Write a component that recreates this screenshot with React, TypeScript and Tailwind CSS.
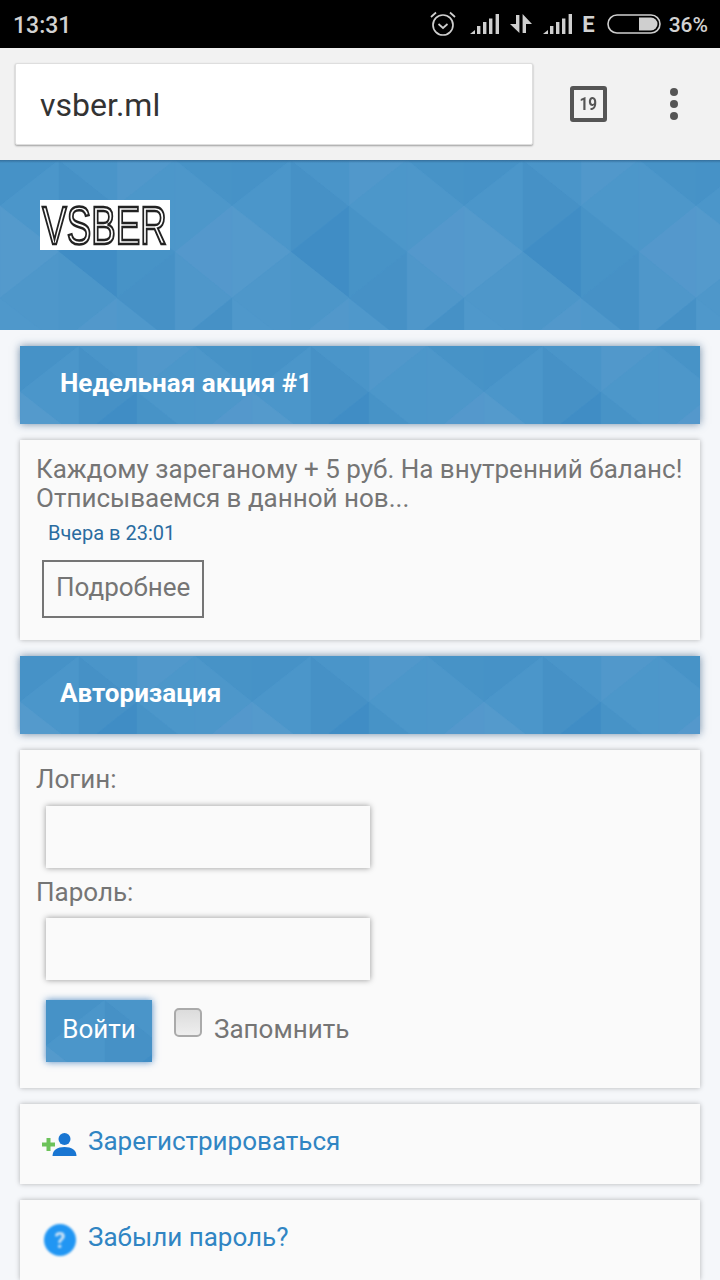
import type {ReactNode} from 'react';

// one tile of the low-poly background, 232px wide
const tile: [string, string][] = [
  ['0,-46 59,0 0,46', '#4591c7'],
  ['0,46 59,0 59,92', '#4b96ca'],
  ['0,46 59,92 0,138', '#569bcd'],
  ['0,138 59,92 59,184', '#4e97ca'],
  ['59,0 117,46 59,92', '#4490c6'],
  ['59,92 117,46 117,138', '#3d8bc4'],
  ['59,92 117,138 59,184', '#4c96c9'],
  ['59,184 117,138 117,230', '#5399cc'],
  ['117,-46 175,0 117,46', '#5298cb'],
  ['117,46 175,0 175,92', '#4c97ca'],
  ['117,46 175,92 117,138', '#4692c7'],
  ['117,138 175,92 175,184', '#4490c6'],
  ['175,0 232,-46 232,46', '#4692c7'],
  ['175,0 232,46 175,92', '#4d97ca'],
  ['175,92 232,46 232,138', '#5699cd'],
  ['175,92 232,138 175,184', '#4f97ca'],
  ['175,184 232,138 232,230', '#4490c6'],
  ['59,0 117,-46 117,46', '#4a95c9'],
];

const Triangles = () => (
  <svg className="absolute top-0 left-0 opacity-80" width="720" height="170" aria-hidden="true">
    {[0, 1, 2, 3].map((k) => (
      <g key={k} transform={`translate(${k * 232},0)`}>
        {tile.map(([points, fill]) => (
          <polygon key={points} points={points} fill={fill} stroke={fill} strokeWidth="0.5" />
        ))}
      </g>
    ))}
  </svg>
);

const SignalIcon = () => (
  <svg width="30" height="21" viewBox="0 0 30 21" fill="#cfcfcf">
    <polygon points="0,20 5,16 5,20" />
    <rect x="7" y="12" width="3.4" height="8" />
    <rect x="13" y="8" width="3.4" height="12" />
    <rect x="19" y="4.5" width="3.4" height="15.5" />
    <rect x="25.6" y="0" width="3.4" height="20" />
  </svg>
);

const AlarmIcon = () => (
  <svg width="28" height="28" viewBox="0 0 28 28" fill="none" stroke="#cfcfcf" strokeWidth="1.7">
    <circle cx="14" cy="15" r="10" />
    <path d="M9.5 14l4.5 4 4.5-4" />
    <path d="M2 7l5-4.5M26 7l-5-4.5" />
  </svg>
);

const ArrowsIcon = () => (
  <svg width="22" height="20" viewBox="0 0 22 20" fill="#cfcfcf">
    <path d="M6 1h3.4v18L0 10h6z" />
    <path d="M12.6 0l9.4 10h-6v9h-3.4z" />
  </svg>
);

const BatteryIcon = () => (
  <svg width="54" height="20" viewBox="0 0 54 20">
    <rect x="1" y="1" width="52" height="18" rx="9" fill="none" stroke="#cfcfcf" strokeWidth="1.6" />
    <path d="M32 3.5h12a6.5 6.5 0 0 1 0 13H32z" fill="#cfcfcf" />
  </svg>
);

const StatusBar = () => (
  <div className="h-12 bg-black flex items-center justify-between pl-[13px] pr-[12px] text-[#d2d2d2] font-medium text-[23px] leading-none">
    <span className="mt-[2px]">13:31</span>
    <div className="flex items-center">
      <AlarmIcon />
      <div className="w-[13px]" />
      <SignalIcon />
      <div className="w-[10px]" />
      <ArrowsIcon />
      <div className="w-[11px]" />
      <SignalIcon />
      <span className="ml-[9px] mr-[12px] font-bold text-[22px] mt-[1px]">E</span>
      <BatteryIcon />
      <span className="ml-[8px] text-[21px] mt-[2px]">36%</span>
    </div>
  </div>
);

const Toolbar = () => (
  <div className="h-28 bg-[#f2f2f2] flex items-center pl-[15px]">
    <div className="w-[518px] h-[82px] mb-[1px] bg-white rounded-[2px] border border-[#dedede] shadow-[0_1px_2px_rgba(0,0,0,0.35)] flex items-center pl-[24px] pt-[2px] text-[#333] text-[32px]">
      vsber.ml
    </div>
    <div className="ml-[37px] w-[37px] h-[36px] border-[4px] border-[#555] rounded-[3px] flex items-center justify-center text-[#555] font-bold text-[18px] leading-none">
      <span className="inline-block scale-x-[0.85]">19</span>
    </div>
    <div className="ml-[63px] flex flex-col gap-[4px]">
      <div className="w-2 h-2 rounded-full bg-[#555]" />
      <div className="w-2 h-2 rounded-full bg-[#555]" />
      <div className="w-2 h-2 rounded-full bg-[#555]" />
    </div>
  </div>
);

const Banner = () => (
  <div className="relative h-[170px] overflow-hidden bg-[#4f98cb]">
    <Triangles />
    <div className="absolute top-0 left-0 right-0 h-[3px] bg-gradient-to-b from-[#356f9c] to-transparent" />
    <div className="relative ml-10 mt-10 w-[130px] h-[50px] bg-white flex items-center justify-center">
      <span className="inline-block scale-x-[0.68] blur-[0.4px] text-white font-['Liberation_Sans',sans-serif] text-[54px] leading-none [-webkit-text-stroke:2.5px_#222]">
        VSBER
      </span>
    </div>
  </div>
);

const SectionTitle = ({children}: {children: ReactNode}) => (
  <div className="relative h-[78px] overflow-hidden bg-[#4f98cb] shadow-[0_0_8px_rgba(40,80,120,0.65)] flex items-center pl-10">
    <Triangles />
    <h2 className="relative mb-1 text-white font-bold text-[26px]">{children}</h2>
  </div>
);

const Card = ({children, className}: {children: ReactNode; className?: string}) => (
  <div className={`bg-[#fafafa] shadow-[0_0_5px_rgba(0,0,0,0.28)] ${className ?? ''}`}>{children}</div>
);

const Field = () => (
  <input className="block ml-[10px] mt-[12px] w-[324px] h-[62px] bg-[#fafafa] shadow-[0_0_6px_rgba(0,0,0,0.4)] outline-none" />
);

const AddUserIcon = () => (
  <svg width="36" height="24" viewBox="0 0 36 24" className="blur-[0.6px]">
    <path d="M0 10.5h4.5V6h4v4.5H13v4H8.500v4.500h-4V14.500H0z" fill="#6cc25a" />
    <circle cx="22.500" cy="7" r="6" fill="#1976d2" />
    <path d="M10.500 24c0-6 5-9 12-9s12 3 12 9z" fill="#1976d2" />
  </svg>
);

const App = () => (
  <div className="w-[720px] h-[1280px] overflow-hidden bg-[#f5f7fa] font-['Roboto',sans-serif]">
    <StatusBar />
    <Toolbar />
    <Banner />
    <div className="flex flex-col gap-4 px-5 pt-4 text-[#757575] text-[26px] leading-[29px]">
      <SectionTitle>Недельная акция #1</SectionTitle>
      <Card className="h-[200px] pl-4 pt-[15px]">
        <p className="whitespace-nowrap">Каждому зареганому + 5 руб. На внутренний баланс!</p>
        <p className="whitespace-nowrap">Отписываемся в данной нов...</p>
        <p className="ml-3 mt-[8px] text-[20px] leading-[24px] text-[#2a6ca0]">Вчера в 23:01</p>
        <button className="block ml-[6px] mt-[15px] w-[162px] h-[58px] border-2 border-[#757575] text-left pl-[12px] pb-[3px]">
          Подробнее
        </button>
      </Card>
      <SectionTitle>Авторизация</SectionTitle>
      <Card className="h-[338px] pl-4 pt-[15px]">
        <label className="block">Логин:</label>
        <Field />
        <label className="block mt-[10px] -mb-[1px]">Пароль:</label>
        <Field />
        <div className="flex items-start mt-5 ml-[10px]">
          <button className="relative w-[106px] h-[62px] overflow-hidden bg-[#4f98cb] shadow-[0_0_7px_rgba(40,110,180,0.8)] text-white pb-[3px]">
            <Triangles />
            <span className="relative">Войти</span>
          </button>
          <input
            type="checkbox"
            className="appearance-none ml-[22px] mt-2 w-[28px] h-[29px] rounded-[5px] border-2 border-[#aaa] bg-gradient-to-b from-[#dcdcdc] to-[#eeeeee]"
          />
          <span className="ml-3 mt-[15px]">Запомнить</span>
        </div>
      </Card>
      <Card className="h-20 flex items-center pl-[22px]">
        <AddUserIcon />
        <a className="ml-[10px] mb-[5px] text-[#3085c3]">Зарегистрироваться</a>
      </Card>
      <Card className="h-20 flex items-center pl-6">
        <div className="w-[32px] h-[32px] rounded-full bg-[#2196f3] blur-[1px] flex items-center justify-center text-[#cfe3f5] font-bold text-[22px]">
          ?
        </div>
        <a className="ml-[12px] mb-[5px] text-[#3085c3]">Забыли пароль?</a>
      </Card>
    </div>
  </div>
);

export default App;
